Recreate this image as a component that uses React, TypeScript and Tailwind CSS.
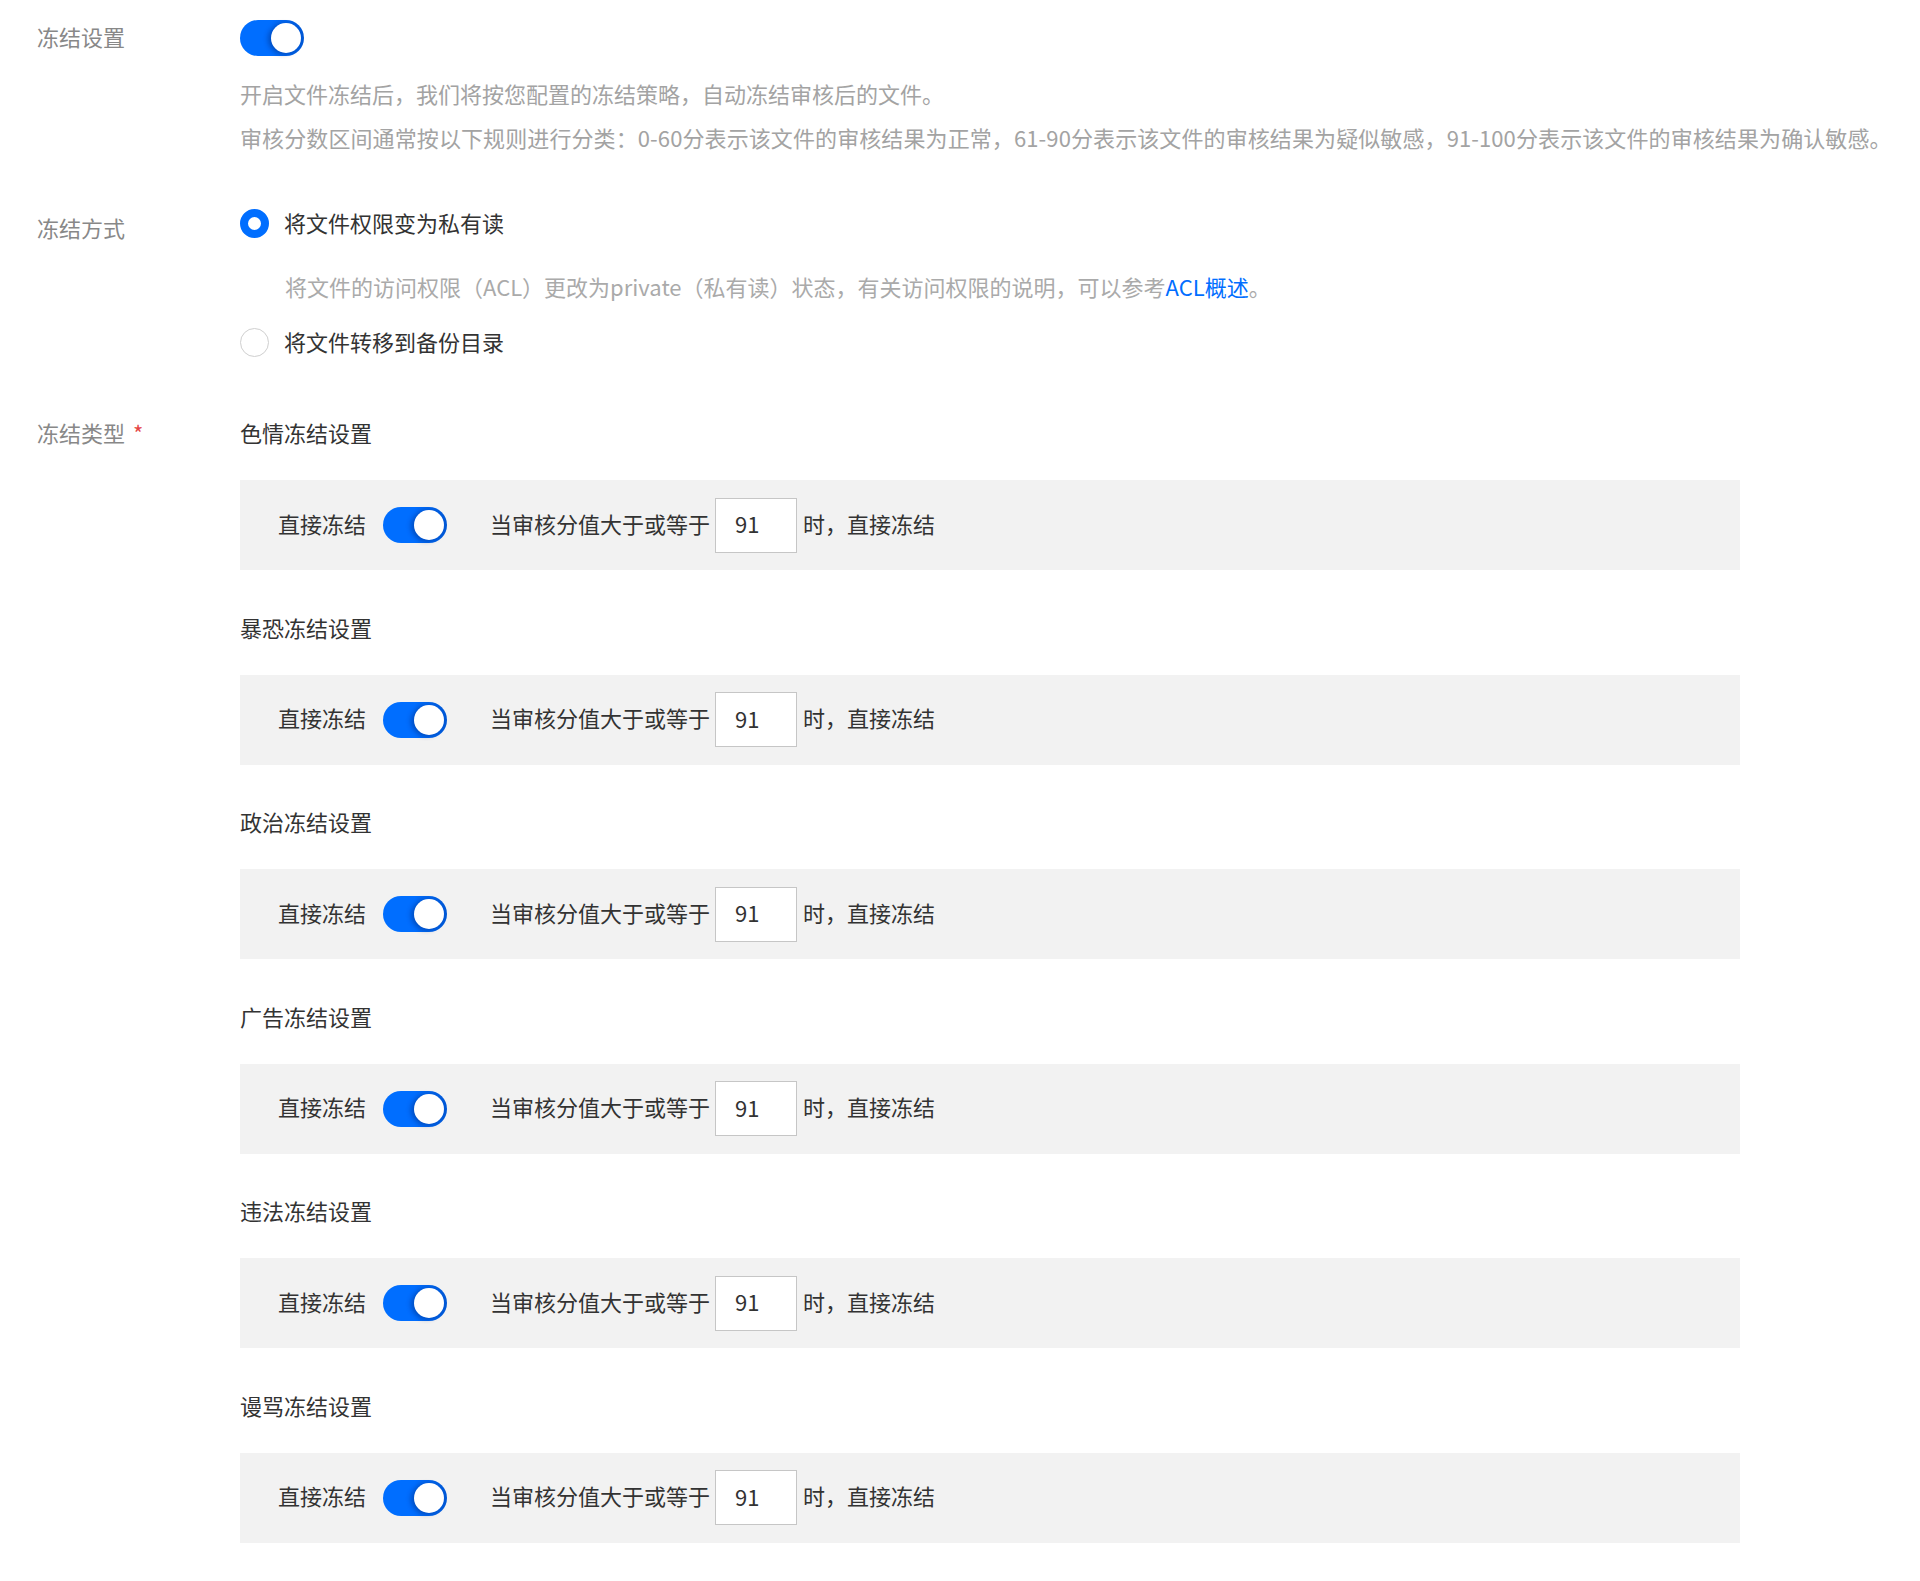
const FONT = { fontFamily: '"Noto Sans CJK SC", "Noto Sans", sans-serif' }

const sections = ['色情冻结设置', '暴恐冻结设置', '政治冻结设置', '广告冻结设置', '违法冻结设置', '谩骂冻结设置']

function Toggle() {
  return (
    <div className="relative h-[36px] w-[64px] shrink-0 rounded-full bg-gradient-to-r from-[#006eff] via-[#006eff] to-[#0058d6]">
      <div className="absolute right-[3px] top-[3px] h-[30px] w-[30px] rounded-full bg-white shadow-[-3px_1px_5px_rgba(0,40,120,0.45)]" />
    </div>
  )
}

function Radio({ checked }: { checked: boolean }) {
  return checked ? (
    <span className="h-[29px] w-[29px] shrink-0 rounded-full border-[8px] border-[#006eff] bg-white" />
  ) : (
    <span className="h-[29px] w-[29px] shrink-0 rounded-full border border-[#cfcfcf] bg-white" />
  )
}

function FreezeSection({ title, first }: { title: string; first?: boolean }) {
  return (
    <div className={first ? '' : 'mt-[42.5px]'}>
      <div className="-mt-[1px] pb-[1px] text-[22px] leading-[30px] text-[#333]">{title}</div>
      <div className="mt-[32px] flex h-[90px] w-[1500px] items-center bg-[#f2f2f2] px-[38px] text-[22px] text-[#333]">
        <span className="-mt-[4px]">直接冻结</span>
        <div className="ml-[17px]">
          <Toggle />
        </div>
        <span className="-mt-[4px] ml-[43px]">当审核分值大于或等于</span>
        <div className="ml-[5px] flex h-[55px] w-[82px] items-center border border-[#c6c6c6] bg-white pb-[3px] pl-[19px] text-[22px] text-[#333]">
          91
        </div>
        <span className="-mt-[4px] ml-[6px]">时，直接冻结</span>
      </div>
    </div>
  )
}

export default function App() {
  return (
    <div className="min-h-[1581px] w-[1920px] bg-white pb-[39px] pl-[37px]" style={FONT}>
      {/* 冻结设置 */}
      <div className="flex">
        <div className="mt-[18px] w-[203px] shrink-0 text-[22px] leading-[36px] text-[#888]">冻结设置</div>
        <div>
          <div className="mt-[20px]">
            <Toggle />
          </div>
          <div className="mt-[15px] text-[22px] leading-[44px] text-[#a3a3a3]">
            <p>开启文件冻结后，我们将按您配置的冻结策略，自动冻结审核后的文件。</p>
            <p className="whitespace-nowrap tracking-[0.1px]">
              审核分数区间通常按以下规则进行分类：0-60分表示该文件的审核结果为正常，61-90分表示该文件的审核结果为疑似敏感，91-100分表示该文件的审核结果为确认敏感。
            </p>
          </div>
        </div>
      </div>

      {/* 冻结方式 */}
      <div className="mt-[49px] flex">
        <div className="mt-[4px] w-[203px] shrink-0 text-[22px] leading-[30px] text-[#888]">冻结方式</div>
        <div>
          <div className="flex h-[30px] items-center gap-[15px]">
            <Radio checked />
            <span className="-mt-[2px] text-[22px] text-[#333]">将文件权限变为私有读</span>
          </div>
          <div className="mt-[33px] pl-[45px] text-[22px] leading-[30px] text-[#aaa]">
            将文件的访问权限（ACL）更改为private（私有读）状态，有关访问权限的说明，可以参考
            <span className="text-[#006eff]">ACL概述</span>。
          </div>
          <div className="mt-[26px] flex h-[30px] items-center gap-[15px]">
            <Radio checked={false} />
            <span className="-mt-[2px] text-[22px] text-[#333]">将文件转移到备份目录</span>
          </div>
        </div>
      </div>

      {/* 冻结类型 */}
      <div className="mt-[61px] flex">
        <div className="-mt-[1px] w-[203px] shrink-0 text-[22px] leading-[30px] text-[#888]">
          冻结类型<span className="ml-[8px] text-[#e54545]">*</span>
        </div>
        <div>
          {sections.map((s, i) => (
            <FreezeSection key={s} title={s} first={i === 0} />
          ))}
        </div>
      </div>
    </div>
  )
}
